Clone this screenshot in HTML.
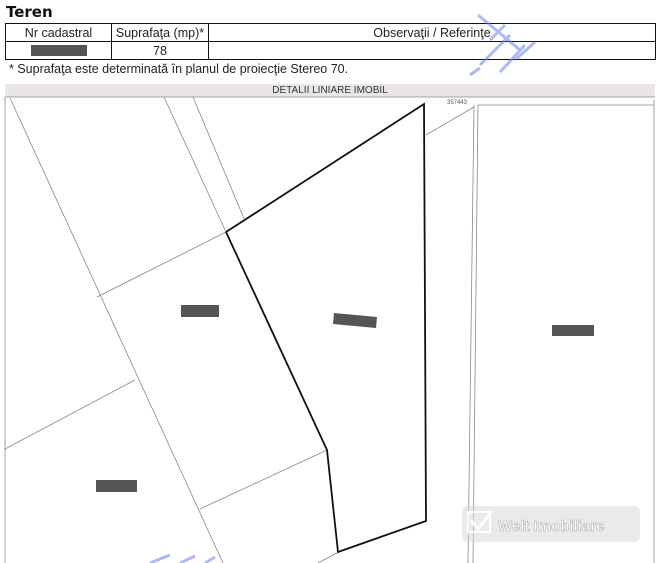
<!DOCTYPE html>
<html><head><meta charset="utf-8"><style>
body{margin:0;width:658px;height:563px;overflow:hidden;background:#fff;font-family:"Liberation Sans",sans-serif;position:relative}
.t{position:absolute;left:6px;top:3px;font-weight:bold;font-size:15px;color:#111;font-family:"DejaVu Sans",sans-serif}
table{position:absolute;left:5px;top:23px;width:651px;border-collapse:collapse;font-size:12.5px;color:#222;table-layout:fixed}
td{border:1.5px solid #111;height:17px;padding:0;text-align:center;white-space:nowrap;overflow:hidden}
.n{position:absolute;left:9px;top:62px;font-size:12.5px;color:#222;white-space:nowrap}
.h{position:absolute;left:5px;top:84px;width:650px;height:13px;background:#ebe6e6;font-size:10px;text-align:center;line-height:13px;color:#333}
svg{position:absolute;left:0;top:0}
</style></head><body>
<div class="t">Teren</div>
<table><tr><td style="width:105px">Nr cadastral</td><td style="width:96px">Suprafaţa (mp)*</td><td>Observaţii / Referinţe</td></tr>
<tr><td><div style="width:56px;height:11px;background:#555;margin:auto"></div></td><td>78</td><td></td></tr></table>
<div class="n">* Suprafaţa este determinată în planul de proiecţie Stereo 70.</div>
<div class="h">DETALII LINIARE IMOBIL</div>
<svg width="658" height="563">
<g stroke="#888" stroke-width="0.8" fill="none">
<line x1="5" y1="97" x2="5" y2="563"/>
<line x1="5" y1="97" x2="655" y2="97"/>
<line x1="10" y1="98" x2="223" y2="563"/>
<line x1="164" y1="97" x2="226" y2="232"/>
<line x1="193" y1="97" x2="245" y2="221"/>
<line x1="97" y1="297" x2="226" y2="232"/>
<line x1="5" y1="449" x2="135" y2="380"/>
<line x1="200" y1="509" x2="327" y2="450"/>
<line x1="426" y1="135" x2="474" y2="107"/>
<line x1="474" y1="105" x2="468" y2="563"/>
<line x1="478" y1="105" x2="473" y2="563"/>
<line x1="478" y1="105" x2="654" y2="105"/>
<line x1="654" y1="100" x2="654" y2="563"/>
<line x1="318" y1="563" x2="337" y2="553"/>
</g>
<polyline points="226,232 424,104 426,521 338,552 327,450 226,232" stroke="#111" stroke-width="1.8" fill="none"/>
<text x="447" y="104" font-size="6" fill="#555">357443</text>
<g fill="#555">
<rect x="181" y="305" width="38" height="12"/>
<polygon points="334,313 377,317 376,328 333,324"/>
<rect x="96" y="480" width="41" height="12"/>
<rect x="552" y="325" width="42" height="11"/>
</g>
<g fill="none" stroke="#6a7ff0" stroke-width="3" opacity="0.55">
<path d="M478 15 L520 50 M490 40 L505 25 M480 65 L510 35 M470 75 L480 68 M500 72 L525 45 M515 60 L535 42"/>
<path d="M150 563 L170 555 M180 563 L195 556 M205 563 L215 557"/>
</g>
<g opacity="0.9">
<rect x="462" y="506" width="178" height="36" fill="#d8d8d8" opacity="0.6" rx="6"/>
<path d="M468 512 h22 v20 h-22z" stroke="#fff" stroke-width="2" fill="none"/>
<path d="M471 520 l7 9 l14 -18" stroke="#fff" stroke-width="3" fill="none"/>
<text x="498" y="531" font-family="Liberation Sans" font-weight="bold" font-size="15" fill="#fff" stroke="#999" stroke-width="0.5">Welt Imobiliare</text>
</g>
</svg>
</body></html>
